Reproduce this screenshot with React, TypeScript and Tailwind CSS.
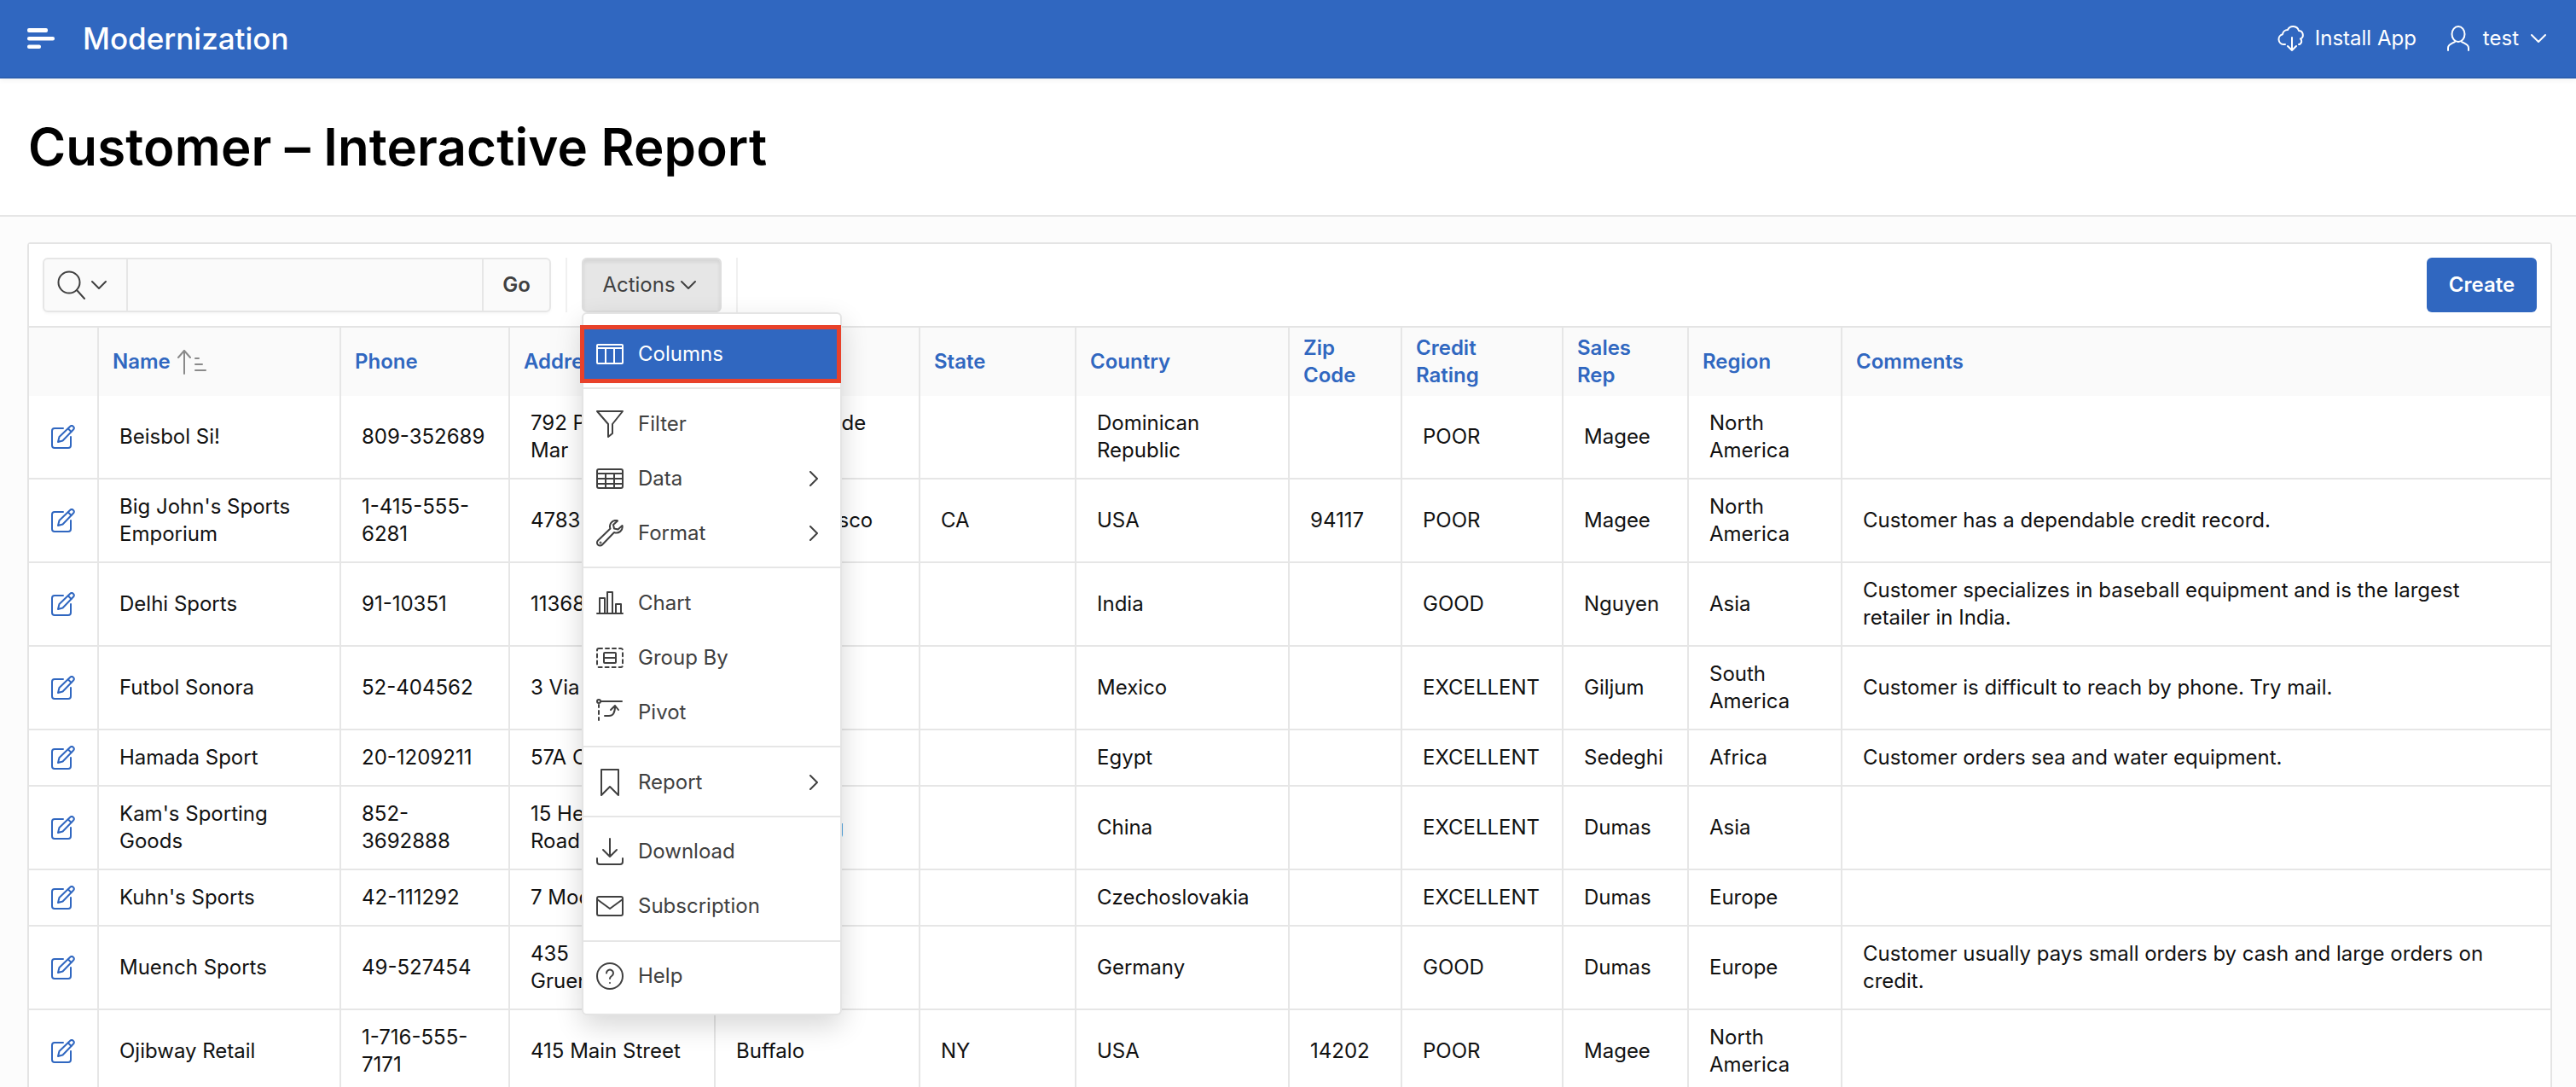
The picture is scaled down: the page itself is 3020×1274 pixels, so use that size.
import React from 'react';

const BLUE = '#3067c0';

interface Row {
  name: string;
  phone: string;
  address: string;
  city: string;
  state: string;
  country: string;
  zip: string;
  rating: string;
  rep: string;
  region: string;
  comments: string;
}

const rows: Row[] = [
  { name: 'Beisbol Si!', phone: '809-352689', address: '792 Playa Del Mar', city: 'San Pedro de Macoris', state: '', country: 'Dominican Republic', zip: '', rating: 'POOR', rep: 'Magee', region: 'North America', comments: '' },
  { name: "Big John's Sports Emporium", phone: '1-415-555-6281', address: '4783 18th Street', city: 'San Francisco', state: 'CA', country: 'USA', zip: '94117', rating: 'POOR', rep: 'Magee', region: 'North America', comments: 'Customer has a dependable credit record.' },
  { name: 'Delhi Sports', phone: '91-10351', address: '11368 Chanakya', city: 'New Delhi', state: '', country: 'India', zip: '', rating: 'GOOD', rep: 'Nguyen', region: 'Asia', comments: 'Customer specializes in baseball equipment and is the largest retailer in India.' },
  { name: 'Futbol Sonora', phone: '52-404562', address: '3 Via Saguaro', city: 'Nogales', state: '', country: 'Mexico', zip: '', rating: 'EXCELLENT', rep: 'Giljum', region: 'South America', comments: 'Customer is difficult to reach by phone. Try mail.' },
  { name: 'Hamada Sport', phone: '20-1209211', address: '57A Corniche', city: 'Alexandria', state: '', country: 'Egypt', zip: '', rating: 'EXCELLENT', rep: 'Sedeghi', region: 'Africa', comments: 'Customer orders sea and water equipment.' },
  { name: "Kam's Sporting Goods", phone: '852-3692888', address: '15 Henessey Road', city: 'Hong Kong', state: '', country: 'China', zip: '', rating: 'EXCELLENT', rep: 'Dumas', region: 'Asia', comments: '' },
  { name: "Kuhn's Sports", phone: '42-111292', address: '7 Modrany', city: 'Prague', state: '', country: 'Czechoslovakia', zip: '', rating: 'EXCELLENT', rep: 'Dumas', region: 'Europe', comments: '' },
  { name: 'Muench Sports', phone: '49-527454', address: '435 Gruenestrasse', city: 'Stuttgart', state: '', country: 'Germany', zip: '', rating: 'GOOD', rep: 'Dumas', region: 'Europe', comments: 'Customer usually pays small orders by cash and large orders on credit.' },
  { name: 'Ojibway Retail', phone: '1-716-555-7171', address: '415 Main Street', city: 'Buffalo', state: 'NY', country: 'USA', zip: '14202', rating: 'POOR', rep: 'Magee', region: 'North America', comments: '' },
];

// header labels, one entry per line
const columns = [
  ['Phone'],
  ['Address'],
  ['City'],
  ['State'],
  ['Country'],
  ['Zip', 'Code'],
  ['Credit', 'Rating'],
  ['Sales', 'Rep'],
  ['Region'],
  ['Comments'],
];

const widths = [82, 284, 198, 241, 240, 183, 250, 132, 189, 147, 180, 830];

const Icon: React.FC<{ size?: number; className?: string; children: React.ReactNode }> = ({ size = 32, className, children }) => (
  <svg width={size} height={size} viewBox="0 0 32 32" fill="none" stroke="currentColor" strokeWidth="2" strokeLinecap="round" strokeLinejoin="round" className={className}>
    {children}
  </svg>
);

const Chevron = ({ className }: { className?: string }) => (
  <svg width="18" height="12" viewBox="0 0 18 12" fill="none" stroke="currentColor" strokeWidth="2" strokeLinecap="round" strokeLinejoin="round" className={className}>
    <path d="M1 2l8 8 8-8" />
  </svg>
);

const ChevronRight = () => (
  <svg width="12" height="18" viewBox="0 0 12 18" fill="none" stroke="currentColor" strokeWidth="2" strokeLinecap="round" strokeLinejoin="round">
    <path d="M2 1l8 8-8 8" />
  </svg>
);

const EditIcon = () => (
  <svg width="28" height="28" viewBox="0 0 28 28" fill="none" stroke={BLUE} strokeWidth="2" strokeLinecap="round" strokeLinejoin="round">
    <path d="M14 4H4a3 3 0 0 0-3 3v17a3 3 0 0 0 3 3h16a3 3 0 0 0 3-3V14" />
    <path d="M8 20l1.500-6L22 2a2.500 2.500 0 0 1 4 3.500L13.500 18.500z" />
    <path d="M20 4.500l3.500 3.500" />
  </svg>
);

const menuIcons: Record<string, React.ReactNode> = {
  Columns: (
    <Icon>
      <rect x="1" y="5" width="30" height="22" rx="1" />
      <path d="M1 9h30M11 9v18M21 9v18" />
    </Icon>
  ),
  Filter: (
    <Icon>
      <path d="M1 1h30L19 16v11l-5 4V16z" />
    </Icon>
  ),
  Data: (
    <Icon>
      <rect x="1" y="5" width="30" height="22" rx="2" />
      <path d="M1 10h30M1 16h30M1 22h30M11 10v17M21 10v17" />
    </Icon>
  ),
  Format: (
    <Icon>
      <path d="M24 1a7 7 0 0 0-7.500 9.500L2 24.500a3.500 3.500 0 0 0 5 5l14-14.500A7 7 0 0 0 30.500 7l-5 4.500-4.500-1-1-4.500 5-4.500z" />
      <circle cx="5" cy="27" r="0.500" />
    </Icon>
  ),
  Chart: (
    <Icon>
      <path d="M1 28h30M4 28V10h6v18M13 28V3h6v25M23 28V17h6v11" />
    </Icon>
  ),
  'Group By': (
    <Icon>
      <rect x="1" y="5" width="30" height="22" rx="2" strokeDasharray="4 4" />
      <rect x="9" y="10" width="14" height="12" rx="1" />
      <path d="M9 16h14" />
    </Icon>
  ),
  Pivot: (
    <Icon>
      <circle cx="3" cy="3" r="2" />
      <path d="M5 3h25M3 7v3M3 14v4M3 22v3" />
      <path d="M10 20h5c5 0 7-4 7-11M17 13l5-5 4 5" />
    </Icon>
  ),
  Report: (
    <Icon>
      <path d="M6 1h20v30L16 21 6 31z" />
    </Icon>
  ),
  Download: (
    <Icon>
      <path d="M16 1v21M8 14l8 8 8-8M1 24v4a3 3 0 0 0 3 3h24a3 3 0 0 0 3-3v-4" />
    </Icon>
  ),
  Subscription: (
    <Icon>
      <rect x="1" y="5" width="30" height="22" rx="2" />
      <path d="M1 8l15 11L31 8" />
    </Icon>
  ),
  Help: (
    <Icon>
      <circle cx="16" cy="16" r="15" />
      <path d="M12 12.500a4 4 0 1 1 6 3.500c-1.500 1-2 1.500-2 3" />
      <path d="M16 24v.1" />
    </Icon>
  ),
};

const MenuItem: React.FC<{ label: string; submenu?: boolean; active?: boolean }> = ({ label, submenu, active }) => (
  <div className={`relative flex h-16 items-center pl-[15px] pr-[25px] text-[24px] ${active ? 'bg-[#3067c0] text-white' : 'text-[#404040]'}`}>
    {menuIcons[label]}
    <span className="ml-[17px] flex-1">{label}</span>
    {submenu && <ChevronRight />}
    {active && <div className="absolute -top-[2px] -bottom-[2px] -left-[4px] -right-[1px] border-[5px] border-[#e8412a]" />}
  </div>
);

const ActionsMenu = () => (
  <div className="absolute left-0 top-full z-10 w-[305px] rounded-md border-2 border-[#e4e4e4] bg-white shadow-[0_12px_32px_rgba(0,0,0,0.16)]">
    <div className="border-b-2 border-[#e6e6e6] pb-[7px] pt-[15px]">
      <MenuItem label="Columns" active />
    </div>
    <div className="border-b-2 border-[#e6e6e6] pb-[7px] pt-[9px]">
      <MenuItem label="Filter" />
      <MenuItem label="Data" submenu />
      <MenuItem label="Format" submenu />
    </div>
    <div className="border-b-2 border-[#e6e6e6] pb-[7px] pt-[9px]">
      <MenuItem label="Chart" />
      <MenuItem label="Group By" />
      <MenuItem label="Pivot" />
    </div>
    <div className="border-b-2 border-[#e6e6e6] pb-[7px] pt-[9px]">
      <MenuItem label="Report" submenu />
    </div>
    <div className="border-b-2 border-[#e6e6e6] py-2">
      <MenuItem label="Download" />
      <MenuItem label="Subscription" />
    </div>
    <div className="pb-3 pt-2">
      <MenuItem label="Help" />
    </div>
  </div>
);

const Toolbar = () => (
  <div className="flex h-[98px] items-start border-b-2 border-[#e4e4e4] bg-white px-4 pt-4">
    {/* Search */}
    <div className="flex h-16 w-[596px] rounded-md border-2 border-[#e6e6e6] bg-[#fafafa] shadow-[0_2px_3px_rgba(0,0,0,0.03)]">
      <div className="flex w-[98px] items-center gap-[6px] border-r-2 border-[#e6e6e6] pl-[15px] text-[#404040]">
        <svg width="34" height="34" viewBox="0 0 34 34" fill="none" stroke="currentColor" strokeWidth="2" strokeLinecap="round">
          <circle cx="14" cy="14" r="12.500" />
          <path d="M23 23l9 10" />
        </svg>
        <Chevron />
      </div>
      <input className="min-w-0 flex-1 bg-transparent outline-none" aria-label="Search" />
      <div className="flex w-[79px] items-center justify-center border-l-2 border-[#e6e6e6] text-[24px] font-semibold text-[#404040]">Go</div>
    </div>
    <div className="ml-[17px] h-16 w-[2px] bg-[#f0f0f0]" />
    {/* Actions */}
    <div className="relative ml-[17px]">
      <div className="flex h-16 w-[164px] items-center justify-center gap-[6px] rounded-md border-2 border-[#dedede] bg-[#e6e6e6] pr-[6px] text-[24px] text-[#404040] shadow-[inset_0_3px_4px_rgba(0,0,0,0.08)]">
        Actions
        <Chevron />
      </div>
      <ActionsMenu />
    </div>
    <div className="ml-[17px] h-16 w-[2px] bg-[#f0f0f0]" />
    <div className="ml-auto flex h-16 w-[129px] items-center justify-center rounded-md bg-[#3067c0] text-[24px] font-semibold text-white">Create</div>
  </div>
);

const cellClass = 'border-b-2 border-r-2 border-[#e6e6e6] px-6 py-4 align-middle text-[24px] font-normal leading-8 text-[#111111] last:border-r-0';
const headClass = 'border-r-2 border-[#e6e6e6] bg-[#fafafa] px-4 py-2 text-left align-middle text-[24px] font-semibold leading-8 text-[#3067c0] last:border-r-0';

const ReportTable = () => (
  <table className="w-full table-fixed border-separate border-spacing-0">
    <colgroup>
      {widths.map((w, i) => (
        <col key={i} style={{ width: w }} />
      ))}
    </colgroup>
    <thead>
      <tr>
        <th className={headClass} />
        <th className={headClass}>
          <span className="flex items-center">
            Name
            <svg width="34" height="30" viewBox="0 0 34 30" fill="none" stroke="#8a8a8a" strokeWidth="2" strokeLinecap="round" strokeLinejoin="round" className="ml-2">
              <path d="M8 29V2M1 10l7-8 7 8" />
              <path d="M21 11h4M21 18h8M21 25h12" />
            </svg>
          </span>
        </th>
        {columns.map((lines) => (
          <th key={lines[0]} className={headClass}>
            {lines.map((line) => (
              <div key={line}>{line}</div>
            ))}
          </th>
        ))}
      </tr>
    </thead>
    <tbody>
      {rows.map((r) => (
        <tr key={r.name}>
          <td className={`${cellClass} !px-0`}>
            <div className="flex justify-center">
              <EditIcon />
            </div>
          </td>
          <td className={cellClass}>{r.name}</td>
          <td className={cellClass}>{r.phone}</td>
          <td className={cellClass}>{r.address}</td>
          <td className={cellClass}>{r.city}</td>
          <td className={cellClass}>{r.state}</td>
          <td className={cellClass}>{r.country}</td>
          <td className={cellClass}>{r.zip}</td>
          <td className={cellClass}>{r.rating}</td>
          <td className={cellClass}>{r.rep}</td>
          <td className={cellClass}>{r.region}</td>
          <td className={cellClass}>{r.comments}</td>
        </tr>
      ))}
    </tbody>
  </table>
);

export default function App() {
  return (
    <div className="h-[1274px] w-[3020px] overflow-hidden bg-[#fcfcfc] font-['Inter',sans-serif] antialiased">
      {/* Top bar */}
      <header className="relative z-20 flex h-[92px] items-center justify-between border-b-2 border-[#2c5fb1] bg-[#3067c0] pl-8 pr-[35px] text-white shadow-[0_2px_6px_rgba(0,0,0,0.06)]">
        <div className="flex items-center">
          <svg width="32" height="24" viewBox="0 0 32 24" fill="white">
            <rect x="0" y="0" width="24" height="5" rx="2" />
            <rect x="0" y="10" width="32" height="4.500" rx="2" />
            <rect x="0" y="19.500" width="16" height="4.500" rx="2" />
          </svg>
          <span className="ml-[33px] text-[35px] font-medium">Modernization</span>
        </div>
        <div className="flex items-center text-[24px]">
          <svg width="34" height="32" viewBox="0 0 34 32" fill="none" stroke="white" strokeWidth="2" strokeLinecap="round" strokeLinejoin="round">
            <path d="M9 23H7a6 6 0 0 1-1-11.800A6 6 0 0 1 12 6a7 7 0 0 1 13 1 5 5 0 0 1 2 9.500 4 4 0 0 1-1 6.500h-1" />
            <path d="M17 15v15M12 25l5 5 5-5" />
          </svg>
          <span className="ml-[10px]">Install App</span>
          <svg width="26" height="30" viewBox="0 0 26 30" fill="none" stroke="white" strokeWidth="2" strokeLinecap="round" strokeLinejoin="round" className="ml-9">
            <ellipse cx="13" cy="10" rx="7.500" ry="9" />
            <path d="M1 29v-3c0-4 5-5 8-7M25 29v-3c0-4-5-5-8-7" />
          </svg>
          <span className="ml-4">test</span>
          <Chevron className="ml-[14px]" />
        </div>
      </header>

      {/* Page title */}
      <div className="flex h-[162px] items-center border-b-2 border-[#e6e6e6] bg-white pl-[33px]">
        <h1 className="text-[60px] font-semibold tracking-[0.14px] text-black">Customer – Interactive Report</h1>
      </div>

      {/* Report region */}
      <div className="pl-8 pr-7 pt-[30px]">
        <div className="rounded-t border-2 border-[#e4e4e4] bg-white">
          <Toolbar />
          <ReportTable />
        </div>
      </div>
    </div>
  );
}
